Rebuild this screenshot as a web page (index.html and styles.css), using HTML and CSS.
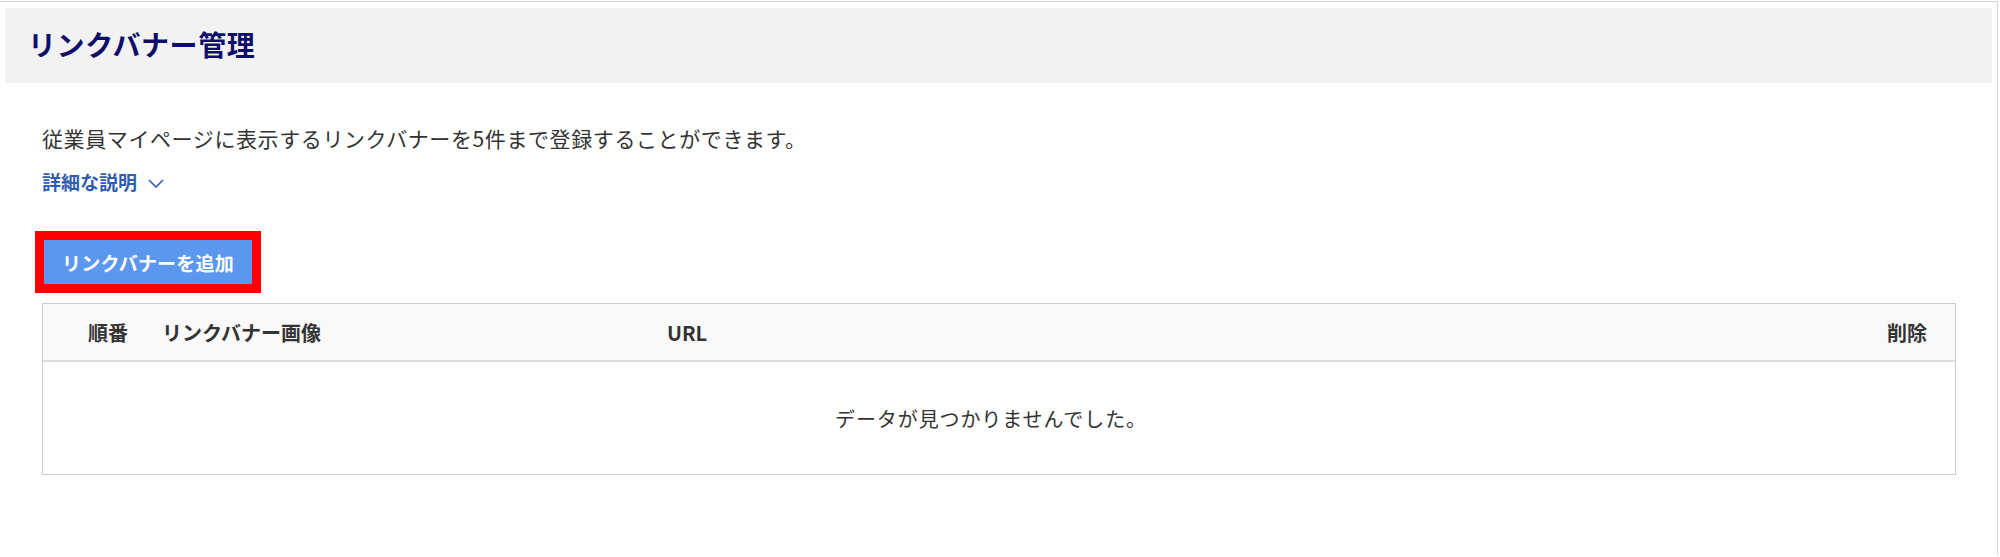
FILE: index.html
```html
<!DOCTYPE html>
<html lang="ja">
<head>
<meta charset="utf-8">
<title>リンクバナー管理</title>
<link rel="stylesheet" href="styles.css">
</head>
<body>
<div class="frame">
  <div class="page-header">
    <h1 class="page-title">リンクバナー管理</h1>
  </div>
  <div class="content">
    <p class="desc">従業員マイページに表示するリンクバナーを5件まで登録することができます。</p>
    <div class="detail-toggle">
      <span class="detail-label">詳細な説明</span>
      <svg class="chevron" width="16" height="9" viewBox="0 0 16 9"><path d="M1 1 L8 8 L15 1" fill="none" stroke="#2f5db0" stroke-width="1.6"/></svg>
    </div>
    <div class="actions">
      <button class="btn-add">リンクバナーを追加</button>
    </div>
    <div class="table">
      <div class="thead">
        <div class="th col-order">順番</div>
        <div class="th col-image">リンクバナー画像</div>
        <div class="th col-url">URL</div>
        <div class="th col-del">削除</div>
      </div>
      <div class="empty">データが見つかりませんでした。</div>
    </div>
  </div>
</div>
</body>
</html>
```
FILE: styles.css
```css
html, body {
  margin: 0;
  padding: 0;
  background: #ffffff;
}
body {
  font-family: "Noto Sans CJK JP", "Noto Sans", sans-serif;
  color: #333333;
}
.frame {
  margin: 1px 2px 0 0;
  border-top: 1px solid #d9d3cc;
  border-right: 1px solid #d9d3cc;
  padding: 6px 5px 0 5px;
  height: 554px;
  box-sizing: border-box;
}
.page-header {
  background: #f2f2f2;
  height: 75px;
  display: flex;
  align-items: center;
  padding: 0 0 3px 23px;
  box-sizing: border-box;
}
.page-title {
  margin: 0;
  font-size: 28px;
  font-weight: 700;
  letter-spacing: 0.6px;
  color: #0f0f6b;
  line-height: 1;
}
.content {
  padding: 40px 36px 0 37px;
}
.desc {
  margin: 0;
  font-size: 21px;
  letter-spacing: 0.6px;
  line-height: 30px;
  color: #333333;
}
.detail-toggle {
  margin-top: 15px;
  display: flex;
  align-items: center;
  height: 28px;
  gap: 11px;
}
.detail-label {
  font-size: 19px;
  font-weight: 700;
  color: #2f5db0;
  line-height: 28px;
}
.chevron {
  display: block;
  margin-top: 2px;
}
.actions {
  margin-top: 44px;
  display: flex;
}
.btn-add {
  margin-left: 2px;
  width: 208px;
  height: 44px;
  background: #5b97ee;
  border: none;
  outline: 9px solid #ff0000;
  color: #ffffff;
  font-family: "Noto Sans CJK JP", "Noto Sans", sans-serif;
  font-size: 19px;
  font-weight: 700;
  letter-spacing: 0.2px;
  padding: 0;
  display: flex;
  align-items: center;
  justify-content: center;
}
.table {
  margin-top: 19px;
  border: 1px solid #cccccc;
}
.thead {
  display: flex;
  align-items: center;
  height: 56px;
  background: #f9f9f9;
  border-bottom: 2px solid #dddddd;
}
.th {
  font-size: 20px;
  font-weight: 700;
  color: #333333;
}
.col-order {
  padding-left: 45px;
  width: 74px;
}
.col-image {
  width: 505px;
}
.col-url {
  flex: 1;
}
.col-del {
  padding-right: 28px;
}
.empty {
  height: 112px;
  display: flex;
  align-items: center;
  justify-content: center;
  padding-right: 16px;
  font-size: 20px;
  letter-spacing: 0.9px;
  color: #333333;
}
```
